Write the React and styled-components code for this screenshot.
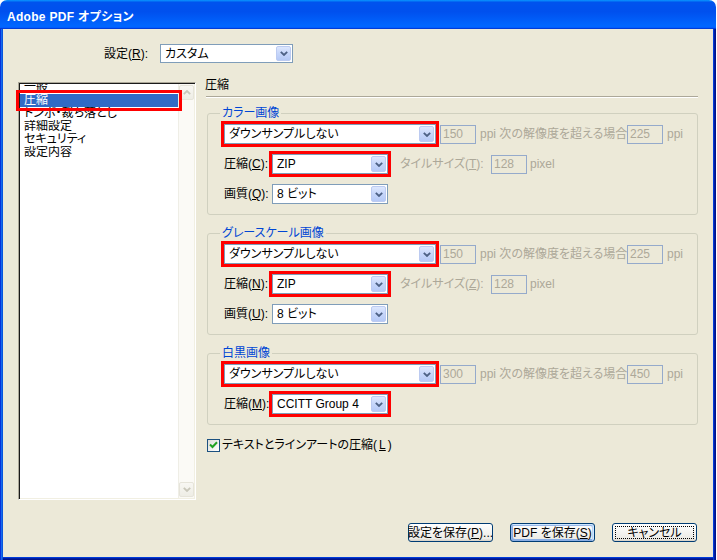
import React from 'react';
import styled, { createGlobalStyle, css } from 'styled-components';

const Global = createGlobalStyle`
  html, body { margin: 0; padding: 0; background: #fff; }
  body {
    font-family: "Liberation Sans", "Noto Sans CJK JP", sans-serif;
    font-size: 12px;
    font-feature-settings: "palt";
    color: #000;
  }
  * { box-sizing: border-box; }
`;

const Window = styled.div`
  width: 716px;
  height: 560px;
  display: flex;
  flex-direction: column;
`;

const TitleBar = styled.div`
  height: 29px;
  flex: none;
  border-radius: 7px 7px 0 0;
  background: linear-gradient(180deg, #0997ff, #0053ee 8%, #0050ee 40%, #0066ff 88%, #0066ff 93%, #005bff 95%, #003dd7 96%, #003dd7);
  display: flex;
  align-items: center;
  padding: 1px 0 0 7px;
  color: #fff;
  font-weight: bold;
  font-size: 12px;
  letter-spacing: 0.3px;
`;

const Body = styled.div`
  flex: 1;
  background: #ece9d8;
  box-shadow: inset 1px 0 #0831d9, inset 2px 0 #166aee, inset 3px 0 #0855dd,
    inset -1px 0 #00138c, inset -2px 0 #001ea0, inset -3px 0 #003bda,
    inset 0 -1px #00138c, inset 0 -2px #001ea0, inset 0 -3px #003bda;
  display: flex;
  flex-direction: column;
  padding: 15px 19px 0 18px;
`;

const TopRow = styled.div`
  display: flex;
  align-items: center;
  height: 19px;
  padding-left: 86px;
  gap: 14px;
`;

const Label = styled.span`
  width: ${p => p.$w}px;
  margin-left: ${p => p.$ml || 0}px;
  flex: none;
  white-space: nowrap;
  line-height: 14px;
  color: ${p => (p.$dim ? '#aca899' : '#000')};
`;

const SelectBox = styled.div`
  width: ${p => p.$w}px;
  height: ${p => p.$h || 20}px;
  flex: none;
  border: 1px solid #7f9db9;
  background: #fff;
  display: flex;
  align-items: stretch;
  padding: 1px;
  ${p => p.$marked && css`outline: 3px solid #ff0000;`}
`;

const SelectValue = styled.span`
  flex: 1;
  display: flex;
  align-items: center;
  padding-left: 3px;
  white-space: nowrap;
  line-height: 14px;
`;

const DropBtn = styled.span`
  width: 15px;
  flex: none;
  border: 1px solid #bccbf1;
  border-radius: 2px;
  background: linear-gradient(180deg, #dde7fd 0%, #c6d6fa 50%, #b5c9f6 100%);
  display: flex;
  align-items: center;
  justify-content: center;
`;

const MainRow = styled.div`
  display: flex;
  align-items: flex-start;
  height: 422px;
  margin-top: 15px;
`;

const ListBox = styled.div`
  width: 178px;
  height: 418px;
  margin-top: 4px;
  flex: none;
  display: flex;
  background: #fff;
  border: 1px solid;
  border-color: #aca899 #fff #fff #aca899;
  box-shadow: inset 1px 1px #1a1a1a, inset -1px -1px #f1efe2;
  padding: 1px;
`;

const ListItems = styled.div`
  flex: 1;
  display: flex;
  flex-direction: column;
`;

const Item = styled.div`
  height: ${p => (p.$cut ? 10 : 13)}px;
  line-height: 13px;
  padding-left: 4px;
  white-space: nowrap;
  overflow: hidden;
  display: flex;
  align-items: flex-end;
  flex: none;
  ${p =>
    p.$sel &&
    css`
      position: relative;
      z-index: 1;
      background: #316ac5;
      color: #fff;
      outline: 3px solid #ff0000;
      outline-offset: 1px;
    `}
`;

const ScrollTrack = styled.div`
  width: 16px;
  flex: none;
  background: #fbfaf6;
  border-left: 1px solid #efeee6;
  display: flex;
  flex-direction: column;
  justify-content: space-between;
  padding: 1px 0;
`;

const ScrollBtn = styled.span`
  width: 15px;
  height: 15px;
  border: 1px solid #e6e4da;
  border-radius: 2px;
  background: linear-gradient(180deg, #f8f7f3, #eeede5);
  display: flex;
  align-items: center;
  justify-content: center;
`;

const Panel = styled.div`
  flex: 1;
  margin-left: 10px;
  display: flex;
  flex-direction: column;
`;

const Heading = styled.div`
  line-height: 14px;
  height: 14px;
  margin-left: -1px;
`;

const Separator = styled.div`
  margin-top: 4px;
  height: 2px;
  border-top: 1px solid #aca899;
  border-bottom: 1px solid #fff;
`;

const Group = styled.div`
  position: relative;
  margin: ${p => p.$mt}px 0 0 1px;
  border: 1px solid #d0d0bf;
  border-radius: 3px;
  padding: 10px 10px 10px 16px;
  display: flex;
  flex-direction: column;
  gap: 10px;
`;

const Legend = styled.span`
  position: absolute;
  top: -8px;
  left: 12px;
  padding: 0 2px;
  background: #ece9d8;
  color: #0046d5;
  line-height: 14px;
`;

const Row = styled.div`
  display: flex;
  align-items: center;
  height: 20px;
`;

const NumField = styled.span`
  width: 36px;
  height: 19px;
  margin-left: ${p => p.$ml || 0}px;
  flex: none;
  border: 1px solid #95aacb;
  background: #ece9d8;
  color: #aca899;
  padding-left: 2px;
  display: flex;
  align-items: center;
  line-height: 14px;
`;

const CheckRow = styled.label`
  display: flex;
  align-items: center;
  gap: 2px;
  margin: 13px 0 0 1px;
  line-height: 14px;
`;

const CheckBox = styled.span`
  width: 13px;
  height: 13px;
  flex: none;
  border: 1px solid #1c5180;
  background: linear-gradient(135deg, #dcdcd7, #ffffff);
  display: flex;
  align-items: center;
  justify-content: center;
`;

const ButtonRow = styled.div`
  display: flex;
  justify-content: flex-end;
  gap: 17px;
  margin-top: 23px;
`;

const Btn = styled.button`
  width: 85px;
  height: 19px;
  padding: 0;
  font: inherit;
  font-size: 12px;
  color: #000;
  border: 1px solid #003c74;
  border-radius: 3px;
  background: linear-gradient(180deg, #ffffff, #ecebe6 86%, #d6d0c5);
  display: flex;
  align-items: center;
  justify-content: center;
  white-space: nowrap;
  line-height: 14px;
  ${p =>
    p.$default &&
    css`
      box-shadow: inset -1px 1px #cee7ff, inset 1px 2px #98b8ea, inset -2px 2px #bcd4f6,
        inset 1px -1px #89ade4, inset 2px -2px #89ade4;
    `}
  ${p =>
    p.$focus &&
    css`
      outline: 1px dotted #000;
      outline-offset: -4px;
    `}
`;

const Chevron = ({ up, color = '#4d6185' }) => (
  <svg width="8" height="5" viewBox="0 0 8 5">
    <path
      d={up ? 'M0.8 4.2 L4 1 L7.2 4.2' : 'M0.8 0.8 L4 4 L7.2 0.8'}
      stroke={color}
      strokeWidth="1.8"
      fill="none"
    />
  </svg>
);

const Select = ({ w, h, marked, children }) => (
  <SelectBox $w={w} $h={h} $marked={marked}>
    <SelectValue>{children}</SelectValue>
    <DropBtn>
      <Chevron />
    </DropBtn>
  </SelectBox>
);

const ResampleRow = ({ a, b }) => (
  <Row>
    <Select w={212} marked>
      ダウンサンプルしない
    </Select>
    <NumField $ml={4}>{a}</NumField>
    <Label $w={143} $ml={4} $dim>
      ppi 次の解像度を超える場合
    </Label>
    <NumField $ml={4}>{b}</NumField>
    <Label $w={20} $ml={4} $dim>
      ppi
    </Label>
  </Row>
);

const CompressRow = ({ k, value, tile, tk }) => (
  <Row>
    <Label $w={48}>
      圧縮(<u>{k}</u>):
    </Label>
    <Select w={116} marked>
      {value}
    </Select>
    {tile && (
      <>
        <Label $w={84} $ml={12} $dim>
          タイルサイズ(<u>{tk}</u>):
        </Label>
        <NumField $ml={7}>128</NumField>
        <Label $w={30} $ml={3} $dim>
          pixel
        </Label>
      </>
    )}
  </Row>
);

const QualityRow = ({ k }) => (
  <Row>
    <Label $w={48}>
      画質(<u>{k}</u>):
    </Label>
    <Select w={116}>8 ビット</Select>
  </Row>
);

export default function App() {
  const items = ['一般', '圧縮', 'トンボ・裁ち落とし', '詳細設定', 'セキュリティ', '設定内容'];
  return (
    <>
      <Global />
      <Window>
        <TitleBar>Adobe PDF オプション</TitleBar>
        <Body>
          <TopRow>
            <Label $w={42}>
              設定(<u>R</u>):
            </Label>
            <Select w={133} h={19}>
              カスタム
            </Select>
          </TopRow>
          <MainRow>
            <ListBox>
              <ListItems>
                {items.map((t, i) => (
                  <Item key={t} $cut={i === 0} $sel={i === 1}>
                    {t}
                  </Item>
                ))}
              </ListItems>
              <ScrollTrack>
                <ScrollBtn>
                  <Chevron up color="#c9c7ba" />
                </ScrollBtn>
                <ScrollBtn>
                  <Chevron color="#c9c7ba" />
                </ScrollBtn>
              </ScrollTrack>
            </ListBox>
            <Panel>
              <Heading>圧縮</Heading>
              <Separator />
              <Group $mt={15}>
                <Legend>カラー画像</Legend>
                <ResampleRow a="150" b="225" />
                <CompressRow k="C" value="ZIP" tile tk="T" />
                <QualityRow k="Q" />
              </Group>
              <Group $mt={18}>
                <Legend>グレースケール画像</Legend>
                <ResampleRow a="150" b="225" />
                <CompressRow k="N" value="ZIP" tile tk="Z" />
                <QualityRow k="U" />
              </Group>
              <Group $mt={18}>
                <Legend>白黒画像</Legend>
                <ResampleRow a="300" b="450" />
                <CompressRow k="M" value="CCITT Group 4" />
              </Group>
              <CheckRow>
                <CheckBox>
                  <svg width="9" height="8" viewBox="0 0 9 8">
                    <path d="M1 3.5 L3.5 6 L8 1.2" stroke="#21a121" strokeWidth="2" fill="none" />
                  </svg>
                </CheckBox>
                テキストとラインアートの圧縮(<u>L</u>)
              </CheckRow>
            </Panel>
          </MainRow>
          <ButtonRow>
            <Btn>
              設定を保存(<u>P</u>)...
            </Btn>
            <Btn $default>
              PDF を保存(<u>S</u>)
            </Btn>
            <Btn $focus>キャンセル</Btn>
          </ButtonRow>
        </Body>
      </Window>
    </>
  );
}
